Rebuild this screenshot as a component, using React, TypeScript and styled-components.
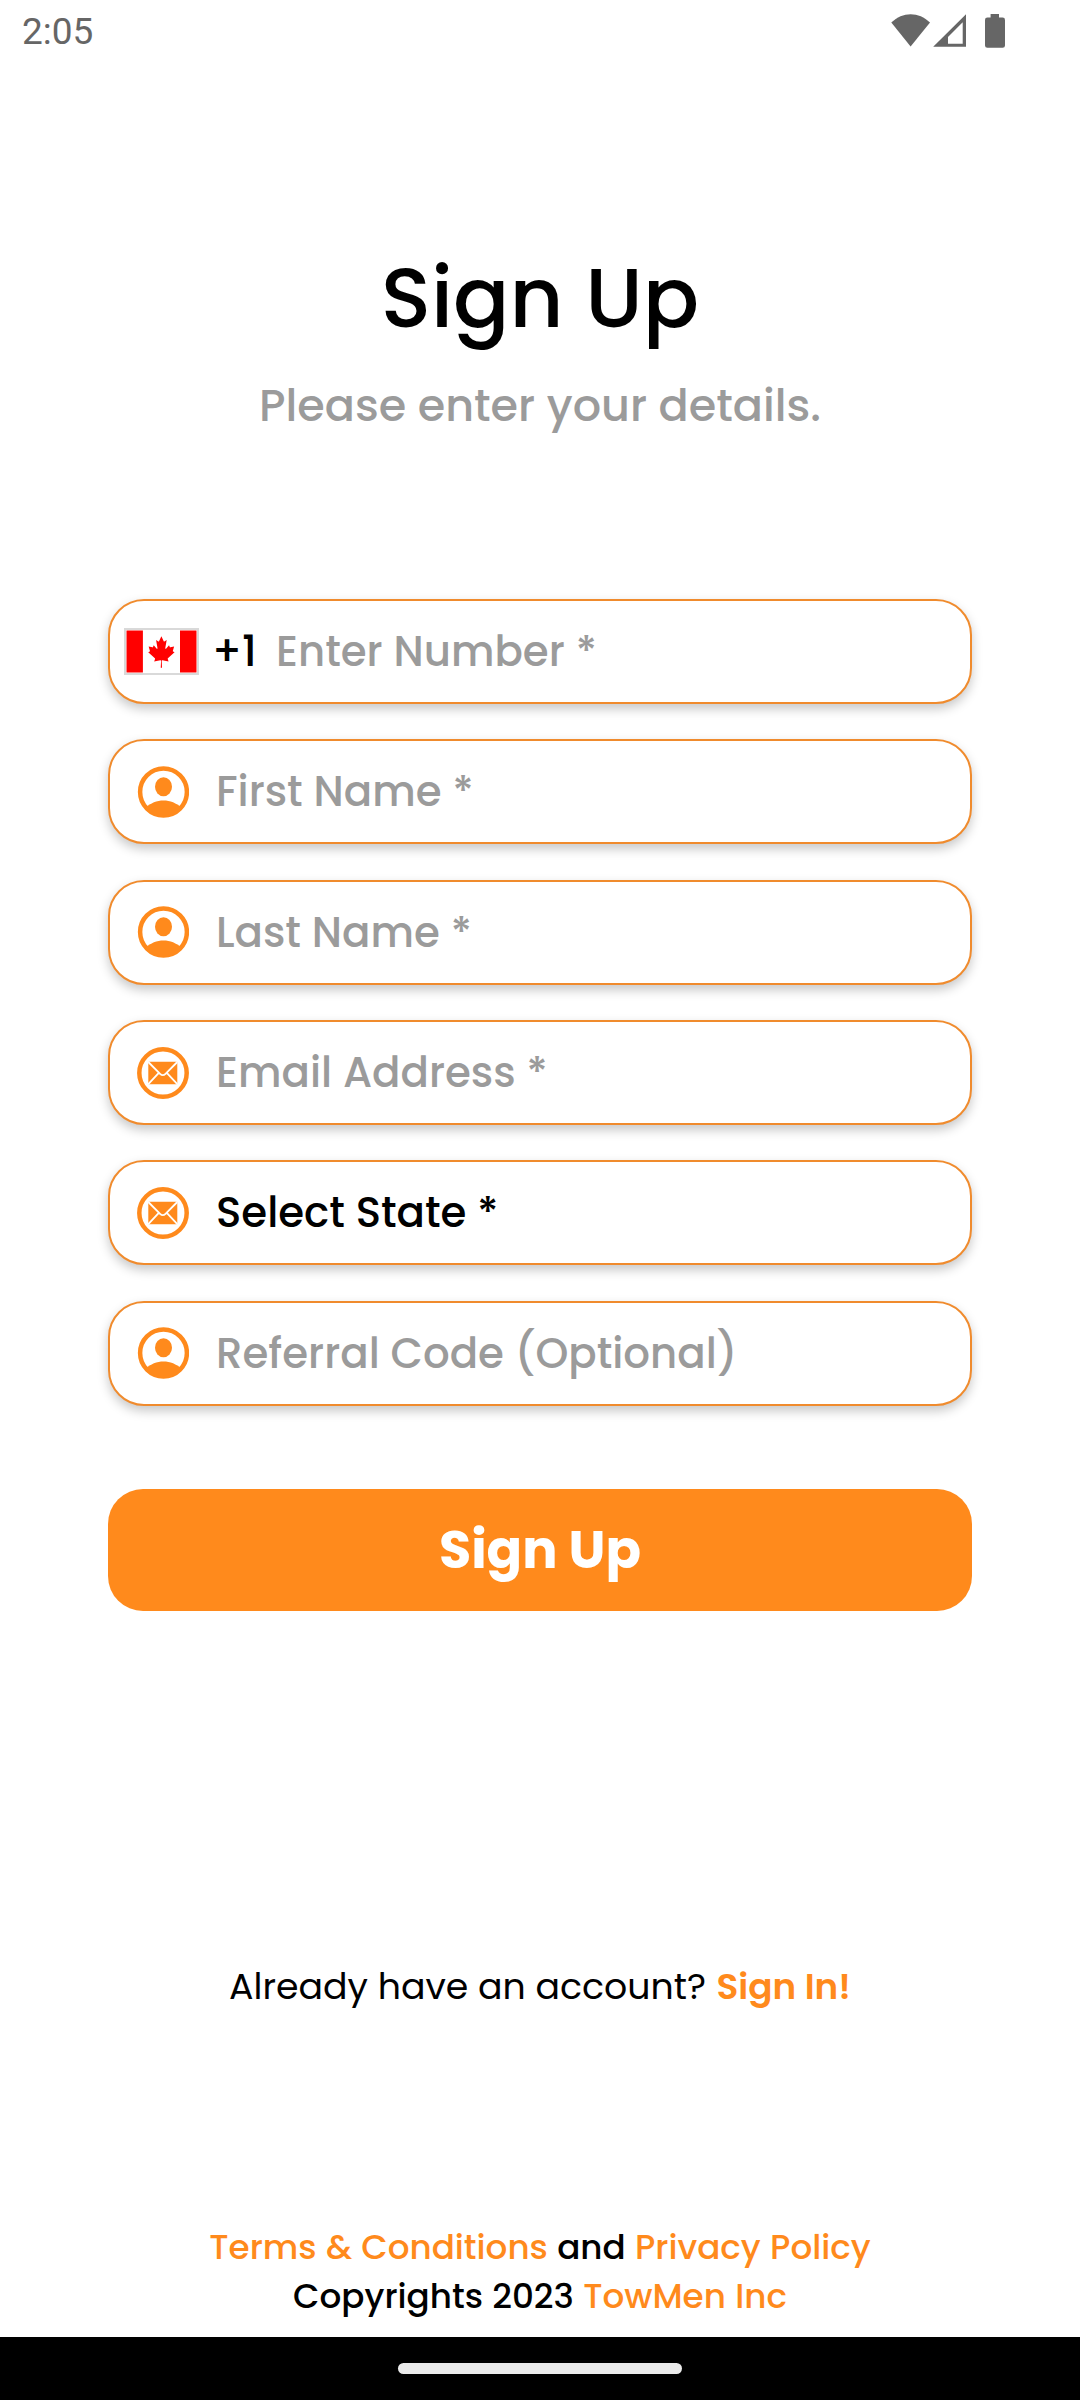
import React from "react";
import styled, { createGlobalStyle } from "styled-components";

const ORANGE = "#ff8a1c";
const GREY = "#9b9b9b";

const GlobalStyle = createGlobalStyle`
  *, *::before, *::after { box-sizing: border-box; }
  body {
    margin: 0;
    background: #fff;
    font-family: Poppins, Inter, "Open Sans", sans-serif;
  }
`;

const Screen = styled.div`
  width: 1080px;
  height: 2400px;
  display: flex;
  flex-direction: column;
  background: #fff;
  overflow: hidden;
`;

const StatusBar = styled.header`
  height: 62px;
  flex: none;
  display: flex;
  align-items: center;
  justify-content: space-between;
  padding: 0 75px 0 22px;
`;

const Clock = styled.time`
  padding-top: 1px;
  font: 400 37px/62px Roboto, sans-serif;
  color: #666;
`;

const StatusIcons = styled.svg`
  width: 114px;
  height: 62px;
  fill: #666;
`;

const Title = styled.h1`
  margin: 176px 0 0;
  font-size: 83.3px;
  font-weight: 500;
  line-height: 120px;
  text-align: center;
  color: #000;
`;

const Subtitle = styled.p`
  margin: 16px 0 0;
  font-size: 44.5px;
  font-weight: 500;
  line-height: 64px;
  text-align: center;
  color: ${GREY};
`;

const Form = styled.form`
  margin: 161px 108px 0;
  display: flex;
  flex-direction: column;
`;

const Fields = styled.div`
  display: flex;
  flex-direction: column;
  gap: 35.35px;
`;

const Field = styled.label`
  height: 105px;
  display: flex;
  align-items: center;
  border: 2px solid #f08b2d;
  border-radius: 36px;
  background: #fff;
  box-shadow: 0 5px 11px rgba(0, 0, 0, 0.22);
`;

const IconSlot = styled.span`
  width: 106px;
  flex: none;
  display: flex;
  padding-left: 27px;
`;

const FieldIcon = styled.svg`
  width: 52px;
  height: 52px;
  display: block;
`;

const FlagSlot = styled.span`
  width: 102px;
  flex: none;
  display: flex;
  padding-left: 14px;
`;

const Flag = styled.svg`
  width: 75px;
  height: 47px;
  display: block;
`;

const DialCode = styled.span`
  width: 64px;
  flex: none;
  font-size: 42px;
  font-weight: 500;
  color: #000;
`;

const FieldText = styled.span<{ $filled?: boolean }>`
  font-size: 41.9px;
  font-weight: 500;
  white-space: nowrap;
  color: ${(p) => (p.$filled ? "#000" : GREY)};
`;

const SubmitButton = styled.button`
  height: 122px;
  margin-top: 83.25px;
  padding: 0;
  border: 0;
  border-radius: 35px;
  background: ${ORANGE};
  color: #fff;
  font: inherit;
  font-size: 52.4px;
  font-weight: 700;
`;

const SignInRow = styled.p`
  margin: 351px 0 0;
  display: flex;
  justify-content: center;
  align-items: baseline;
  gap: 10.5px;
  font-size: 36.3px;
  line-height: 50px;
  white-space: nowrap;
  color: #000;
`;

const SignInLink = styled.a`
  font-size: 35.8px;
  font-weight: 600;
  color: ${ORANGE};
`;

const Legal = styled.footer`
  margin-top: auto;
  padding-bottom: 17px;
  font-size: 34.2px;
  font-weight: 500;
  line-height: 48.5px;
  word-spacing: 0.4px;
  text-align: center;
  white-space: nowrap;
  color: #000;
`;

const LegalLine = styled.div``;

const LegalLink = styled.a`
  color: ${ORANGE};
`;

const NavBar = styled.nav`
  height: 63px;
  flex: none;
  display: flex;
  justify-content: center;
  align-items: center;
  background: #000;
`;

const HomeHandle = styled.span`
  width: 284px;
  height: 11px;
  border-radius: 6px;
  background: #ebebeb;
`;

const UserIcon = () => (
  <FieldIcon viewBox="0 0 52 52">
    <defs>
      <clipPath id="disc">
        <circle cx="26.5" cy="26" r="25" />
      </clipPath>
    </defs>
    <circle cx="26.5" cy="26" r="23.4" fill="none" stroke={ORANGE} strokeWidth="4.5" />
    <ellipse cx="26.5" cy="20.8" rx="8.5" ry="9.5" fill={ORANGE} />
    <path
      clipPath="url(#disc)"
      d="M8.5 41.5C13.5 37 20 34.4 26.5 34.4S39.5 37 44.5 41.5V52h-36Z"
      fill={ORANGE}
    />
  </FieldIcon>
);

const MailIcon = () => (
  <FieldIcon viewBox="0 0 52 52">
    <circle cx="26" cy="26" r="23.7" fill="none" stroke={ORANGE} strokeWidth="4.5" />
    <rect x="11.3" y="14.8" width="29" height="22.4" rx="0.8" fill={ORANGE} />
    <path
      d="M11.3 15l11.8 11.8q2.7 2.6 5.4 0L40.3 15M11.3 37.2l10.5-11.4M40.3 37.2L29.8 25.8"
      fill="none"
      stroke="#fff"
      strokeWidth="1.8"
    />
  </FieldIcon>
);

const CanadaFlag = () => (
  <Flag viewBox="0 0 75 47">
    <rect width="75" height="47" fill="#d9d9d9" />
    <rect x="2" y="2" width="71" height="43" fill="#fff" />
    <path d="M2.5 2.5h16.4v42H2.5ZM56 2.5h16.5v42H56Z" fill="#f00" />
    <g transform="translate(3.4 5) scale(0.00708 0.00785)">
      <path
        fill="#f00"
        d="m4890 4430-45-863a95 95 0 0 1 111-98l859 151-116-320a65 65 0 0 1 20-73l941-762-212-99a65 65 0 0 1-34-79l186-572-542 115a65 65 0 0 1-73-38l-105-247-423 454a65 65 0 0 1-111-57l204-1052-327 189a65 65 0 0 1-91-27l-332-652-332 652a65 65 0 0 1-91 27l-327-189 204 1052a65 65 0 0 1-111 57l-423-454-105 247a65 65 0 0 1-73 38l-542-115 186 572a65 65 0 0 1-34 79l-212 99 941 762a65 65 0 0 1 20 73l-116 320 859-151a95 95 0 0 1 111 98l-45 863z"
      />
    </g>
  </Flag>
);

type FieldSpec = { label: string; icon: "user" | "mail"; filled?: boolean };

const fields: FieldSpec[] = [
  { label: "First Name *", icon: "user" },
  { label: "Last Name *", icon: "user" },
  { label: "Email Address *", icon: "mail" },
  { label: "Select State *", icon: "mail", filled: true },
  { label: "Referral Code (Optional)", icon: "user" },
];

export default function App() {
  return (
    <Screen>
      <GlobalStyle />
      <StatusBar>
        <Clock>2:05</Clock>
        <StatusIcons viewBox="0 0 114 62">
          <path d="M0.3 22.6C11.5 11.4 27.8 11.4 39 22.6L19.6 46.6Z" />
          <path d="M75 14.3V46.7H42.2ZM71.7 22.3L57 37V43.7H71.7Z" fillRule="evenodd" />
          <path d="M99.6 14h8.4v3.6h3.6a2.4 2.4 0 0 1 2.4 2.4v25.4a2.4 2.4 0 0 1-2.4 2.4H96.4a2.4 2.4 0 0 1-2.4-2.4V20a2.4 2.4 0 0 1 2.4-2.4h3.2Z" />
        </StatusIcons>
      </StatusBar>

      <Title>Sign Up</Title>
      <Subtitle>Please enter your details.</Subtitle>

      <Form>
        <Fields>
          <Field>
            <FlagSlot>
              <CanadaFlag />
            </FlagSlot>
            <DialCode>+1</DialCode>
            <FieldText>Enter Number *</FieldText>
          </Field>
          {fields.map((f) => (
            <Field key={f.label}>
              <IconSlot>{f.icon === "user" ? <UserIcon /> : <MailIcon />}</IconSlot>
              <FieldText $filled={f.filled}>{f.label}</FieldText>
            </Field>
          ))}
        </Fields>
        <SubmitButton type="button">Sign Up</SubmitButton>
      </Form>

      <SignInRow>
        <span>Already have an account?</span>
        <SignInLink>Sign In!</SignInLink>
      </SignInRow>

      <Legal>
        <LegalLine>
          <LegalLink>Terms &amp; Conditions</LegalLink> and <LegalLink>Privacy Policy</LegalLink>
        </LegalLine>
        <LegalLine>
          Copyrights 2023 <LegalLink>TowMen Inc</LegalLink>
        </LegalLine>
      </Legal>

      <NavBar>
        <HomeHandle />
      </NavBar>
    </Screen>
  );
}
